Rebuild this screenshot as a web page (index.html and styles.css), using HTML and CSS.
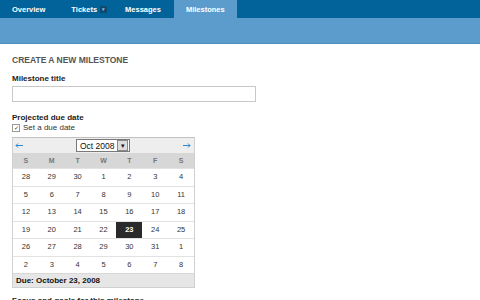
FILE: index.html
```html
<!DOCTYPE html>
<html lang="en">
<head>
    <meta charset="UTF-8">
    <title>Milestones</title>
    <link rel="stylesheet" href="styles.css">
</head>
<body>
    <div class="nav">
        <a class="tab" href="#">Overview</a>
        <a class="tab tab-drop" href="#">Tickets <span class="drop">&#9662;</span></a>
        <a class="tab" href="#">Messages</a>
        <a class="tab active" href="#">Milestones</a>
    </div>
    <div class="subbar"></div>

    <div class="content">
        <h2>Create a new milestone</h2>

        <label class="field-label first" for="title">Milestone title</label>
        <input type="text" id="title" class="text-input">

        <label class="field-label">Projected due date</label>
        <label class="check"><span class="box">&#10003;</span> Set a due date</label>

        <div class="calendar">
            <div class="cal-head">
                <svg class="arrow" width="8" height="5" viewBox="0 0 8 5"><path d="M1 2.5H8M3 0.5L1 2.5L3 4.5" fill="none" stroke="#2b87d0" stroke-width="1"/></svg>
                <span class="month-select">Oct 2008 <span class="sel-btn">&#9662;</span></span>
                <svg class="arrow" width="8" height="5" viewBox="0 0 8 5"><path d="M0 2.5H7M5 0.5L7 2.5L5 4.5" fill="none" stroke="#2b87d0" stroke-width="1"/></svg>
            </div>
            <div class="cal-grid">
                <div class="dayname">S</div><div class="dayname">M</div><div class="dayname">T</div><div class="dayname">W</div><div class="dayname">T</div><div class="dayname">F</div><div class="dayname">S</div>
            </div>
            <div class="cal-grid" id="days"></div>
            <div class="cal-foot">Due: October 23, 2008</div>
        </div>

        <p class="notes-label">Focus and goals for this milestone</p>
    </div>

    <script>
        const days = [28, 29, 30, 1, 2, 3, 4, 5, 6, 7, 8, 9, 10, 11, 12, 13, 14, 15, 16, 17, 18,
            19, 20, 21, 22, 23, 24, 25, 26, 27, 28, 29, 30, 31, 1, 2, 3, 4, 5, 6, 7, 8];
        const grid = document.getElementById('days');
        days.forEach((d, i) => {
            const cell = document.createElement('div');
            cell.className = 'day';
            if (i === 25) cell.classList.add('selected');
            cell.textContent = d;
            grid.appendChild(cell);
        });
    </script>
</body>
</html>
```

FILE: styles.css
```css
body {
    margin: 0;
    font-family: "Liberation Sans", Arial, sans-serif;
    color: #222;
    background: #fff;
}

.nav {
    display: flex;
    height: 18px;
    background-color: #02639a;
}

.tab {
    display: flex;
    align-items: center;
    padding: 0 12px;
    color: #fff;
    font-size: 7.5px;
    font-weight: bold;
    text-decoration: none;
}

.tab-drop {
    padding: 0 6px 0 14px;
}

.tab.active {
    margin-left: 1px;
    background-color: #5b9ccc;
}

.drop {
    display: inline-block;
    width: 7px;
    height: 7px;
    margin-left: 3px;
    background-color: #0c4a70;
    color: #8fb3cc;
    font-size: 5px;
    line-height: 7px;
    text-align: center;
}

.subbar {
    height: 25px;
    background-color: #5b9ccc;
    border-bottom: 1px solid #4f8fc0;
}

.content {
    padding: 0 12px;
}

h2 {
    margin: 11px 0 0;
    font-size: 8.5px;
    text-transform: uppercase;
    color: #555;
}

.field-label {
    display: block;
    margin-top: 11px;
    font-size: 8px;
    font-weight: bold;
    color: #222;
}

.field-label.first {
    margin-top: 9px;
}

.text-input {
    display: block;
    box-sizing: border-box;
    width: 244px;
    height: 16px;
    margin: 3px 0 0;
    border: 1px solid #c8c8c8;
}

.check {
    display: flex;
    align-items: center;
    gap: 3px;
    margin-top: 1px;
    font-size: 8px;
    color: #333;
}

.box {
    display: inline-block;
    box-sizing: border-box;
    width: 8px;
    height: 8px;
    border: 1px solid #999;
    font-size: 6px;
    line-height: 6px;
    text-align: center;
    color: #333;
}

.calendar {
    width: 181px;
    margin-top: 5px;
    border: 1px solid #d0d0d0;
    border-top-color: #c0c0c0;
    font-size: 7.5px;
}

.cal-head {
    display: flex;
    justify-content: space-between;
    align-items: center;
    height: 15px;
    padding: 0 3px 0 2px;
    background-color: #eeeeee;
}

.arrow {
    display: block;
    margin-top: -1px;
}

.month-select {
    display: flex;
    align-items: center;
    justify-content: space-between;
    box-sizing: border-box;
    width: 54px;
    height: 13px;
    padding-left: 3px;
    background: #fff;
    border: 1px solid #7a7a7a;
    font-size: 8.5px;
    color: #111;
}

.sel-btn {
    display: inline-block;
    width: 9px;
    height: 9px;
    margin-right: 1px;
    border: 1px solid #888;
    background: #ddd;
    font-size: 7px;
    line-height: 9px;
    text-align: center;
}

.cal-grid {
    display: grid;
    grid-template-columns: repeat(7, 1fr);
}

.dayname {
    height: 15px;
    line-height: 15px;
    text-align: center;
    background-color: #d7d7d7;
    color: #777;
    font-weight: bold;
    font-size: 7px;
}

.day {
    height: 16.5px;
    line-height: 16.5px;
    text-align: center;
    border-top: 1px solid #e2e2e2;
    color: #333;
}

.day.selected {
    background-color: #2a2a2a;
    color: #fff;
    font-weight: bold;
}

.cal-foot {
    height: 13px;
    line-height: 13px;
    padding-left: 3px;
    background-color: #e6e6e6;
    border-top: 1px solid #d8d8d8;
    font-weight: bold;
    font-size: 8px;
    color: #111;
}

.notes-label {
    margin: 8px 0 0;
    font-size: 8px;
    font-weight: bold;
    color: #222;
}
```
